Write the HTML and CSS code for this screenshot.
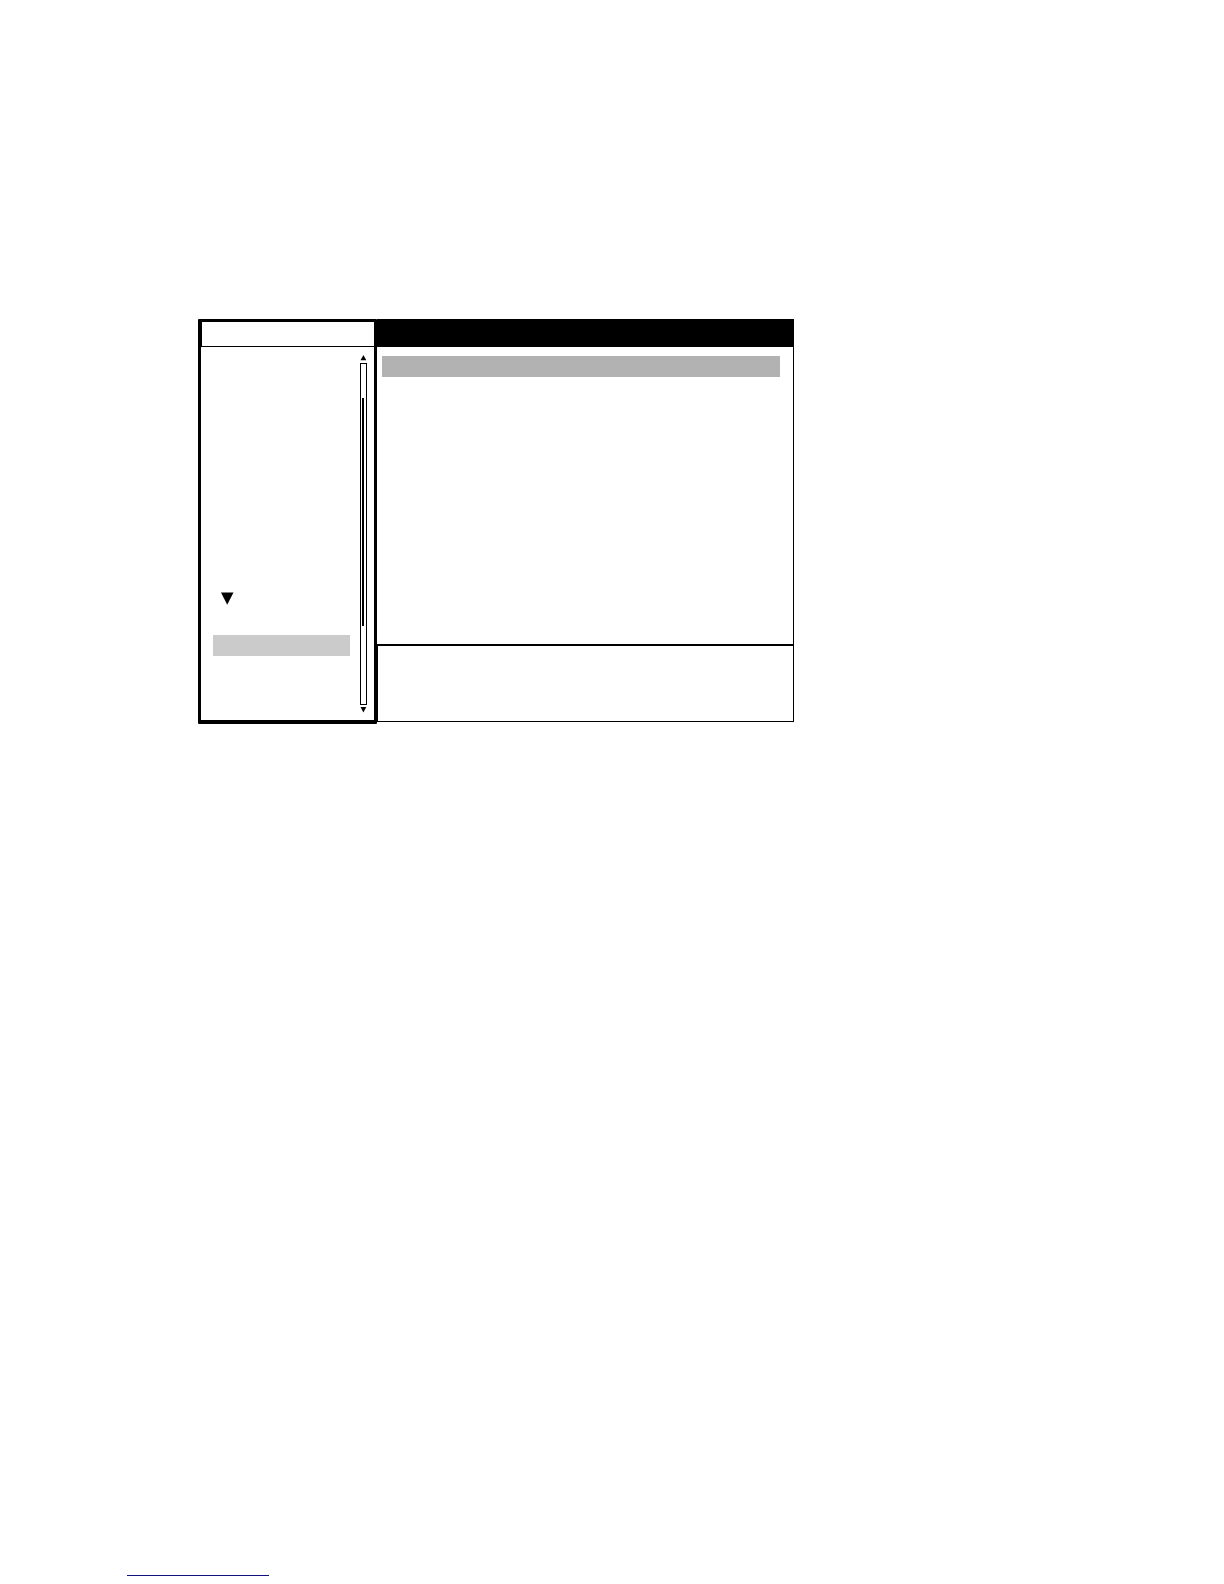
FILE: index.html
```html
<!DOCTYPE html>
<html lang="en">
<head>
    <meta charset="UTF-8">
    <meta name="viewport" content="width=device-width, initial-scale=1.0">
    <title>Settings Menu</title>
    <link rel="stylesheet" href="styles.css">
</head>
<body>
    <main class="window">
        <nav class="sidebar" aria-label="Menu">
            <div class="sidebar-header"></div>
            <div class="sidebar-body">
                <div class="menu">
                    <button class="expand" type="button" aria-label="Expand">
                        <svg width="13" height="13" viewBox="0 0 13 13"><path d="M0 0.5H12.5L6.2 12.8Z"/></svg>
                    </button>
                    <button class="menu-item" type="button" aria-label="Selected item"></button>
                </div>
                <div class="scrollbar">
                    <svg width="7" height="6" viewBox="0 0 7 6"><path d="M3.4 0L6.3 5.3H0.5Z"/></svg>
                    <div class="track">
                        <div class="thumb"></div>
                    </div>
                    <svg width="7" height="6" viewBox="0 0 7 6"><path d="M0.5 0H6.3L3.4 5.5Z"/></svg>
                </div>
            </div>
        </nav>

        <section class="content">
            <div class="content-header"></div>
            <div class="content-body">
                <div class="selected-row"></div>
            </div>
            <div class="content-help"></div>
        </section>
    </main>

    <footer>
        <a class="footer-link" href="#" aria-label="Link"></a>
    </footer>
</body>
</html>
```
FILE: styles.css
```css
* {
    box-sizing: border-box;
}

body {
    font-family: "Liberation Sans", Arial, sans-serif;
    background-color: #ffffff;
    margin: 0;
    padding: 319px 16px 8px 127px;
    display: flex;
    flex-direction: column;
    justify-content: space-between;
    min-height: 100vh;
}

button {
    background: none;
    border: none;
    padding: 0;
    cursor: pointer;
}

svg {
    display: block;
}

.window {
    display: grid;
    grid-template-columns: 179px 1fr;
    width: 100%;
    max-width: 596px;
    min-height: 405px;
    margin-left: 71px;
}

/* Left menu */
.sidebar {
    display: flex;
    flex-direction: column;
    border: 3px solid #000;
    border-bottom-width: 4px;
    border-radius: 1px;
}

.sidebar-header {
    height: 25px;
    border-left: 1px solid #000;
    border-bottom: 1px solid #000;
}

.sidebar-body {
    flex: 1;
    display: flex;
    gap: 10px;
    padding: 8px 7px 7px 12px;
}

.menu {
    flex: 1;
    display: flex;
    flex-direction: column;
    justify-content: flex-end;
    gap: 30px;
    padding-bottom: 57px;
}

.expand {
    width: 13px;
    margin-left: 8px;
}

.menu-item {
    height: 21px;
    background-color: #cbcbcb;
}

.scrollbar {
    display: flex;
    flex-direction: column;
    gap: 2px;
    width: 7px;
}

.track {
    flex: 1;
    padding: 34px 2px 0 1px;
    border: 1px solid #000;
}

.thumb {
    height: 228px;
    background-color: #000;
}

/* Right panel */
.content {
    display: flex;
    flex-direction: column;
    margin-bottom: 2px;
}

.content-header {
    height: 28px;
    background-color: #000;
}

.content-body {
    flex: 1;
    padding: 9px 13px 9px 5px;
    border-right: 1px solid #000;
}

.selected-row {
    height: 21px;
    background-color: #b2b2b2;
}

.content-help {
    height: 78px;
    border: 1px solid #000;
    border-top-width: 2px;
}

.footer-link {
    display: block;
    width: 142px;
    border-bottom: 1px solid #10107e;
}
```
